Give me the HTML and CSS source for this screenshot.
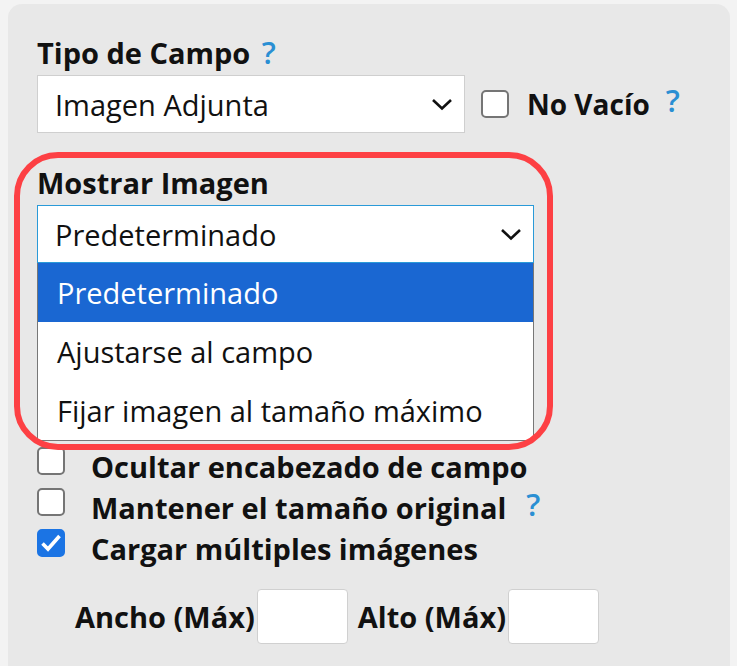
FILE: index.html
```html
<!DOCTYPE html>
<html lang="es">
<head>
<meta charset="utf-8">
<title>Campo</title>
<link rel="stylesheet" href="styles.css">
</head>
<body>
<div class="panel">
  <div class="field-label">Tipo de Campo <span class="help">?</span></div>
  <div class="row">
    <div class="select select-type">
      <span class="select-text">Imagen Adjunta</span>
      <svg class="chev" width="22" height="13" viewBox="0 0 22 13"><path d="M2 2 L11 10.5 L20 2" fill="none" stroke="#111" stroke-width="2.6"/></svg>
    </div>
    <span class="cbox"></span>
    <span class="inline-label">No Vacío</span>
    <span class="help help-inline">?</span>
  </div>

  <div class="field-label label-second">Mostrar Imagen</div>
  <div class="select select-show">
    <span class="select-text">Predeterminado</span>
    <svg class="chev" width="22" height="13" viewBox="0 0 22 13"><path d="M2 2 L11 10.5 L20 2" fill="none" stroke="#111" stroke-width="2.6"/></svg>
  </div>

  <div class="checks">
    <div class="check-row"><span class="cbox"></span><span class="check-label">Ocultar encabezado de campo</span></div>
    <div class="check-row"><span class="cbox"></span><span class="check-label">Mantener el tamaño original</span><span class="help help-check">?</span></div>
    <div class="check-row"><span class="cbox checked"><svg width="22" height="20" viewBox="0 0 22 20"><path d="M2.5 10.5 L8 16 L19.5 3" fill="none" stroke="#fff" stroke-width="3.6"/></svg></span><span class="check-label">Cargar múltiples imágenes</span></div>
  </div>

  <div class="size-row">
    <span class="size-label">Ancho (Máx)</span><span class="size-input"></span>
    <span class="size-label size-gap">Alto (Máx)</span><span class="size-input"></span>
  </div>

  <div class="listbox">
    <div class="option active">Predeterminado</div>
    <div class="option">Ajustarse al campo</div>
    <div class="option">Fijar imagen al tamaño máximo</div>
  </div>
  <div class="highlight"></div>
</div>
</body>
</html>
```
FILE: styles.css
```css
html, body {
  margin: 0;
  padding: 0;
  background: #f3f3f3;
  font-family: "Open Sans", "Liberation Sans", sans-serif;
  color: #111;
}

.panel {
  position: relative;
  margin: 4px 0 0 8px;
  width: 722px;
  height: 662px;
  box-sizing: border-box;
  background: #e8e8e8;
  border-radius: 14px 14px 0 0;
  padding: 30px 0 0 29px;
}

.field-label {
  font-weight: 700;
  font-size: 29px;
  line-height: 37px;
}

.label-second {
  margin-top: 31px;
}

.help {
  color: #2a8fd3;
  font-weight: 600;
  font-size: 31px;
  margin-left: 4px;
}

.row {
  display: flex;
  align-items: center;
  margin-top: 4px;
}

.select {
  position: relative;
  box-sizing: border-box;
  height: 58px;
  background: #fff;
  border: 1px solid #cfcfcf;
  display: flex;
  align-items: center;
  padding-left: 17px;
  font-size: 29px;
}

.select-type {
  width: 428px;
}

.select-show {
  width: 497px;
  margin-top: 4px;
  border-color: #2a9ad8;
}

.select-text {
  color: #111;
}

.chev {
  position: absolute;
  right: 11px;
  top: 22px;
}

.cbox {
  box-sizing: border-box;
  width: 28px;
  height: 28px;
  border: 2px solid #757575;
  border-radius: 5px;
  background: #fff;
  flex: none;
  display: flex;
  align-items: center;
  justify-content: center;
}

.cbox.checked {
  background: #1b74e4;
  border-color: #1b74e4;
}

.row .cbox {
  margin-left: 16px;
}

.inline-label {
  font-weight: 700;
  font-size: 28px;
  margin-left: 18px;
}

.help-inline {
  margin-left: 16px;
  margin-top: -8px;
}

.checks {
  margin-top: 184px;
  display: flex;
  flex-direction: column;
  gap: 13px;
}

.check-row {
  display: flex;
  align-items: flex-end;
  height: 28px;
}

.check-label {
  font-weight: 700;
  font-size: 29px;
  line-height: 28px;
  margin-left: 26px;
  position: relative;
  top: 6px;
}

.help-check {
  line-height: 28px;
  margin-left: 20px;
  position: relative;
  top: 2px;
}

.size-row {
  display: flex;
  align-items: center;
  margin-top: 32px;
  margin-left: 38px;
}

.size-label {
  font-weight: 700;
  font-size: 29px;
}

.size-gap {
  margin-left: 10px;
}

.size-input {
  box-sizing: border-box;
  width: 91px;
  height: 55px;
  background: #fff;
  border: 1px solid #d0d0d0;
  border-radius: 4px;
  margin-left: 2px;
}

.listbox {
  position: absolute;
  left: 29px;
  top: 259px;
  width: 497px;
  box-sizing: border-box;
  background: #fff;
  border: 1px solid #777;
  border-top: none;
  font-size: 29px;
}

.option {
  height: 59px;
  display: flex;
  align-items: center;
  padding-left: 19px;
  color: #111;
}

.option.active {
  background: #1a67d2;
  color: #fff;
  height: 59px;
}

.highlight {
  position: absolute;
  left: 6px;
  top: 148px;
  width: 539px;
  height: 298px;
  box-sizing: border-box;
  border: 6px solid #fd4044;
  border-radius: 44px;
  pointer-events: none;
}
```
